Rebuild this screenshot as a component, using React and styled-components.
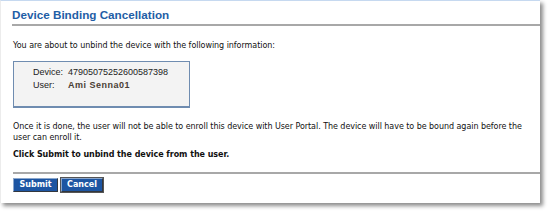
import React from "react"
import styled, { createGlobalStyle } from "styled-components"

const GlobalStyle = createGlobalStyle`
  html, body {
    margin: 0;
    padding: 0;
    background: #ffffff;
  }
`

const Stage = styled.div`
  width: 552px;
  height: 216px;
  background: #ffffff;
  overflow: hidden;
`

const Panel = styled.div`
  width: 540px;
  height: 203px;
  box-sizing: border-box;
  background: #ffffff;
  border-top: 1px solid #c6d9f0;
  border-left: 1px solid #ececec;
  box-shadow: 3px 3px 4px rgba(0, 0, 0, 0.45);
  display: flex;
  flex-direction: column;
`

const TitleBar = styled.div`
  margin-left: 11px;
  padding-top: 7px;
  height: 16px;
  border-bottom: 2px solid #a8a8a8;
`

const Title = styled.h1`
  margin: 0;
  font-family: "Liberation Sans", Arial, sans-serif;
  font-size: 11.7px;
  font-weight: bold;
  color: #1f5ea6;
  line-height: 14px;
`

const Body = styled.div`
  padding: 0 0 0 12px;
  font-family: "DejaVu Sans", Verdana, sans-serif;
  font-size: 8px;
  letter-spacing: -0.05px;
  color: #111;
  line-height: 11px;
`

const Text = styled.p`
  margin: ${({ top }) => top}px 0 0;
  font-weight: ${({ bold }) => (bold ? "bold" : "normal")};
`

const InfoBox = styled.div`
  margin-top: 10px;
  width: 177px;
  height: 47px;
  box-sizing: border-box;
  background: #f3f3f3;
  border: 1px solid #6f8cb0;
  border-bottom-width: 2px;
  padding: 5px 0 0 19px;
  display: grid;
  grid-template-columns: 35px auto;
  align-content: start;
  row-gap: 2px;
  font-family: "Liberation Sans", Arial, sans-serif;
  font-size: 9px;
  letter-spacing: 0;
  line-height: 11px;
  color: #222;
`

const Value = styled.span`
  font-weight: ${({ strong }) => (strong ? "bold" : "normal")};
  color: ${({ strong }) => (strong ? "#4a3e35" : "#222")};
  letter-spacing: ${({ strong }) => (strong ? "0.5px" : "0")};
`

const Footer = styled.div`
  margin-top: 12px;
  margin-left: 12px;
  border-top: 2px solid #a8a8a8;
  padding-top: 4px;
  display: flex;
  gap: 3px;
`

const Button = styled.button`
  height: 14px;
  width: ${({ w }) => w}px;
  padding: 0;
  background: #1d55a2;
  color: #ffffff;
  font-family: "DejaVu Sans", Verdana, sans-serif;
  font-size: 8px;
  font-weight: bold;
  line-height: 10px;
  border: 1px solid;
  border-color: #8aa6cc #33373d #33373d #8aa6cc;
  outline: ${({ focused }) => (focused ? "1px solid #555" : "none")};
  outline-offset: 0;
  cursor: pointer;
`

export default function App() {
  return (
    <>
      <GlobalStyle />
      <Stage>
        <Panel>
          <TitleBar>
            <Title>Device Binding Cancellation</Title>
          </TitleBar>
          <Body>
            <Text top={14}>
              You are about to unbind the device with the following information:
            </Text>
            <InfoBox>
              <span>Device:</span>
              <Value>47905075252600587398</Value>
              <span>User:</span>
              <Value strong>Ami Senna01</Value>
            </InfoBox>
            <Text top={13}>
              Once it is done, the user will not be able to enroll this device
              with User Portal. The device will have to be bound again before
              the user can enroll it.
            </Text>
            <Text top={6} bold>
              Click Submit to unbind the device from the user.
            </Text>
          </Body>
          <Footer>
            <Button w={45}>Submit</Button>
            <Button w={42} focused>
              Cancel
            </Button>
          </Footer>
        </Panel>
      </Stage>
    </>
  )
}
